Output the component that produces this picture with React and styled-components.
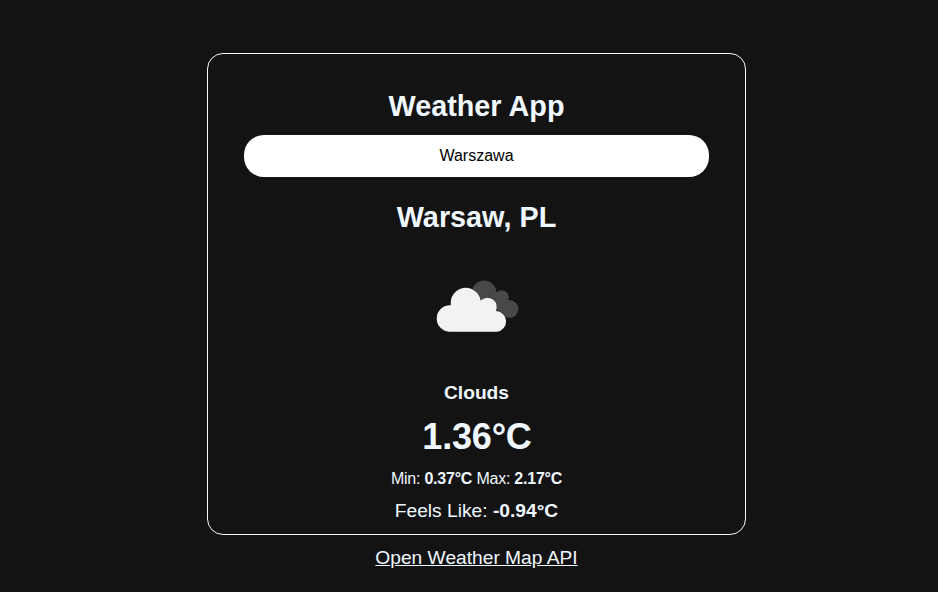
import React from "react";
import styled, { createGlobalStyle } from "styled-components";

const GlobalStyle = createGlobalStyle`
  * { box-sizing: border-box; margin: 0; padding: 0; }
  body {
    background: #131313;
    color: aliceblue;
    font-family: "Liberation Sans", Arial, sans-serif;
  }
`;

const Page = styled.main`
  display: flex;
  flex-direction: column;
  align-items: center;
  height: 592px;
  padding: 53px 0 0 15px;
`;

const Card = styled.section`
  display: flex;
  flex-direction: column;
  align-items: center;
  width: 539px;
  height: 482px;
  padding: 34px 36px 0;
  border: 1px solid aliceblue;
  border-radius: 16px;
`;

const Heading = styled.h1`
  font-size: 28.8px;
  line-height: 36px;
`;

const SearchInput = styled.input`
  width: 465px;
  height: 42px;
  margin: 11px 0 22px;
  border: 0;
  border-radius: 20px;
  outline: 0;
  background: #fff;
  color: #000;
  font: 16px "Liberation Sans", Arial, sans-serif;
  text-align: center;
`;

const CloudIcon = styled.svg`
  width: 100px;
  height: 100px;
  margin: 21px 0 25px;
`;

const Condition = styled.h3`
  font-size: 19.2px;
  line-height: 24px;
`;

const Temperature = styled.h2`
  margin-top: 10px;
  padding-left: 1px;
  font-size: 36px;
  letter-spacing: -0.2px;
  line-height: 44px;
`;

const Range = styled.p`
  margin-top: 10px;
  font-size: 16px;
  letter-spacing: -0.23px;
  line-height: 20px;
`;

const FeelsLike = styled.p`
  margin-top: 10px;
  font-size: 19.2px;
  line-height: 24px;
`;

const SourceLink = styled.a`
  margin-top: 11px;
  color: aliceblue;
  font-size: 19.2px;
  line-height: 24px;
`;

export default function App() {
  return (
    <>
      <GlobalStyle />
      <Page>
        <Card>
          <Heading>Weather App</Heading>
          <SearchInput defaultValue="Warszawa" aria-label="City" />
          <Heading>Warsaw, PL</Heading>
          <CloudIcon viewBox="426.5 256 100 100" role="img" aria-label="Clouds">
            <g fill="#48484a">
              <circle cx="483.6" cy="292.6" r="12.2" />
              <circle cx="501" cy="297.5" r="7.3" />
              <circle cx="508.9" cy="309" r="9" />
              <path d="M484 292L501 292L510 317L490 317Z" />
            </g>
            <path
              d="M448.7 331.8A13.2 13.2 0 1 1 450.4 305.2A15 15 0 1 1 480.2 300.6A9.3 9.3 0 0 1 495.4 310.9A10.5 10.5 0 0 1 496.5 331.8Z"
              fill="#f2f2f0"
              stroke="#20201f"
              strokeWidth="1"
              paintOrder="stroke"
            />
          </CloudIcon>
          <Condition>Clouds</Condition>
          <Temperature>1.36°C</Temperature>
          <Range>
            Min: <b>0.37°C</b> Max: <b>2.17°C</b>
          </Range>
          <FeelsLike>
            Feels Like: <b>-0.94°C</b>
          </FeelsLike>
        </Card>
        <SourceLink href="#">Open Weather Map API</SourceLink>
      </Page>
    </>
  );
}
